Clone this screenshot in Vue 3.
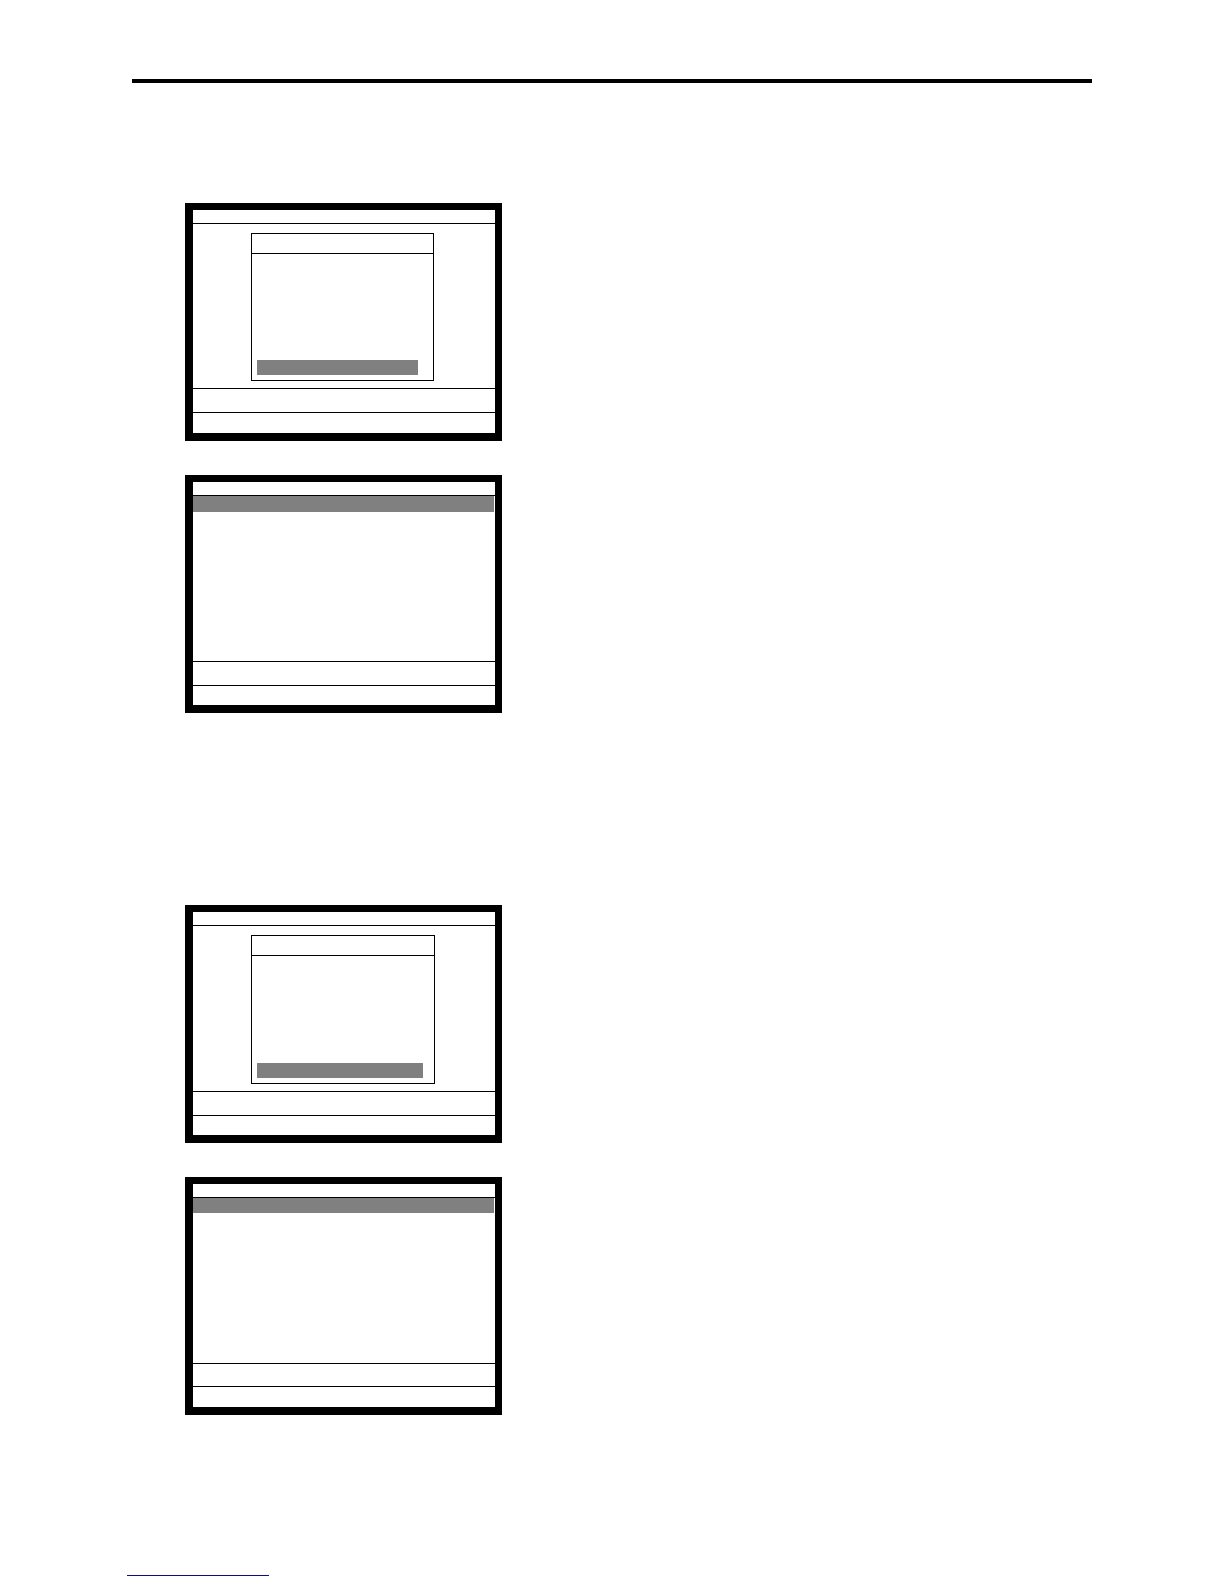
<script setup>
import { ref } from 'vue'

const MENU_TYPE = 1
const LIST_TYPE = 2

const groupAry = ref([
  {
    id: 1,
    screens: [
      { id: 11, type: MENU_TYPE, menuWidth: 183, barWidth: 161, messageHeight: 24, footHeight: 21 },
      { id: 12, type: LIST_TYPE, barHeight: 16, messageHeight: 24, footHeight: 20 }
    ]
  },
  {
    id: 2,
    screens: [
      { id: 21, type: MENU_TYPE, menuWidth: 184, barWidth: 166, messageHeight: 24, footHeight: 20 },
      { id: 22, type: LIST_TYPE, barHeight: 15, messageHeight: 23, footHeight: 21 }
    ]
  }
])
</script>

<template>
  <div class="page">
    <main class="content">
      <hr class="topRule">

      <section class="screenGroup" v-for="group in groupAry" :key="group.id">
        <div class="screenBox" v-for="item in group.screens" :key="item.id">
          <div class="screenTitle"></div>

          <div class="screenBody">
            <div class="menuBox" v-if="item.type == MENU_TYPE" :style="{ width: item.menuWidth + 'px' }">
              <div class="menuTitle"></div>
              <div class="menuList">
                <div class="menuSelected" :style="{ width: item.barWidth + 'px' }"></div>
              </div>
            </div>
            <div class="listSelected" v-else :style="{ height: item.barHeight + 'px' }"></div>
          </div>

          <div class="screenLine" :style="{ height: item.messageHeight + 'px' }"></div>
          <div class="screenLine" :style="{ height: item.footHeight + 'px' }"></div>
        </div>
      </section>
    </main>

    <footer class="pageFoot">
      <a class="footLink" href="#"></a>
    </footer>
  </div>
</template>

<style>
body {
  margin: 0;
  background: white;
}
</style>

<style scoped>
.page, .page * {
  box-sizing: border-box;
}

.page {
  padding-top: 79px;
  font-family: "Liberation Sans", Arial, sans-serif;
}

.content {
  display: flex;
  flex-direction: column;
  padding: 0 132px;
}

.topRule {
  width: 100%;
  height: 4px;
  margin: 0 0 120px;
  border: 0;
  background: black;
}

.screenGroup {
  display: flex;
  flex-direction: column;
  gap: 34px;
  padding-left: 53px;
}

.screenGroup + .screenGroup {
  margin-top: 192px;
}

.screenBox {
  display: flex;
  flex-direction: column;
  width: 317px;
  max-width: 100%;
  height: 238px;
  border: 7px solid black;
  border-left-width: 8px;
  border-bottom-width: 8px;
}

.screenTitle {
  height: 14px;
  border-bottom: 1px solid black;
}

.screenBody {
  display: flex;
  flex-direction: column;
  flex: 1;
}

.screenLine {
  border-top: 1px solid black;
}

.menuBox {
  display: flex;
  flex-direction: column;
  flex: 1;
  margin: 9px 0 7px 58px;
  border: 1px solid black;
}

.menuTitle {
  height: 20px;
  border-bottom: 1px solid black;
}

.menuList {
  display: flex;
  flex: 1;
  align-items: flex-end;
  padding: 5px;
}

.menuSelected {
  height: 15px;
  background: #808080;
}

.listSelected {
  margin-right: 1px;
  background: #808080;
}

.pageFoot {
  padding: 160px 127px 8px;
}

.footLink {
  display: block;
  width: 142px;
  border-bottom: 1px solid #0c0c8c;
}
</style>
